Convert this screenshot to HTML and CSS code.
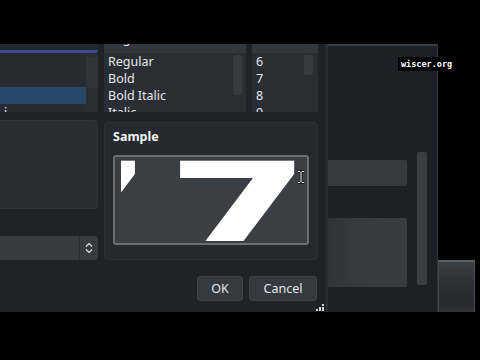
FILE: index.html
```html
<!DOCTYPE html>
<html>
<head>
<meta charset="utf-8">
<link rel="stylesheet" href="styles.css">
</head>
<body>
<div class="screen">
  <div class="bar-top"></div>
  <div class="stage">
    <div class="dialog">
      <div class="lists">
        <div class="col family">
          <div class="filter"></div>
          <div class="list">
            <div class="rows">
              <div class="row"></div>
              <div class="row"></div>
              <div class="row selected"></div>
              <div class="row"><span class="cut-text">i</span></div>
            </div>
            <div class="track"><div class="thumb fam-thumb"></div></div>
          </div>
        </div>
        <div class="col styles">
          <div class="band"><div class="band-text">Regular</div></div>
          <div class="list">
            <div class="rows">
              <div class="row">Regular</div>
              <div class="row">Bold</div>
              <div class="row">Bold Italic</div>
              <div class="row">Italic</div>
            </div>
            <div class="track"><div class="thumb style-thumb"></div></div>
          </div>
        </div>
        <div class="col sizes">
          <div class="band"></div>
          <div class="list">
            <div class="rows">
              <div class="row">6</div>
              <div class="row">7</div>
              <div class="row">8</div>
              <div class="row">9</div>
            </div>
            <div class="track"><div class="thumb size-thumb"></div></div>
          </div>
        </div>
      </div>

      <div class="middle">
        <div class="left-b">
          <div class="panel"></div>
          <div class="combo">
            <div class="combo-text"></div>
            <div class="spin">
              <svg width="8" height="12" viewBox="0 0 8 12"><path d="M1 4.5 L4 1.5 L7 4.5 M1 7.5 L4 10.5 L7 7.5" fill="none" stroke="#e8e8e8" stroke-width="1.2"/></svg>
            </div>
          </div>
        </div>
        <div class="sample-group">
          <div class="sample-label">Sample</div>
          <div class="sample-box">
            <div class="sample-view">
              <div class="sample-text">77</div>
            </div>
            <svg class="ibeam" width="8" height="14" viewBox="0 0 8 14"><path d="M1 1.5 H3 L4 2.5 L5 1.5 H7 M4 2.5 V11.5 M1 12.5 H3 L4 11.5 L5 12.5 H7" fill="none" stroke="#111" stroke-width="2.4"/><path d="M1 1.5 H3 L4 2.5 L5 1.5 H7 M4 2.5 V11.5 M1 12.5 H3 L4 11.5 L5 12.5 H7" fill="none" stroke="#f4f4f4" stroke-width="1"/></svg>
          </div>
        </div>
      </div>

      <div class="buttons">
        <div class="btn ok">OK</div>
        <div class="btn cancel">Cancel</div>
      </div>
      <svg class="grip" width="9" height="7" viewBox="0 0 9 7"><rect x="6" y="0" width="2" height="2" fill="#cfd2d6"/><rect x="3" y="3" width="2" height="2" fill="#cfd2d6"/><rect x="6" y="3" width="2" height="2" fill="#cfd2d6"/><rect x="0" y="5" width="2" height="2" fill="#cfd2d6"/><rect x="3" y="5" width="2" height="2" fill="#cfd2d6"/><rect x="6" y="5" width="2" height="2" fill="#cfd2d6"/></svg>
    </div>

    <div class="sidewin">
      <div class="side-content">
        <div class="side-bar"></div>
        <div class="side-rect"></div>
      </div>
      <div class="side-scroll"></div>
    </div>

    <div class="outside">
      <div class="mini-block"></div>
    </div>
  </div>
  <div class="bar-bottom"></div>
  <div class="watermark">wiscer.org</div>
</div>
</body>
</html>
```
FILE: styles.css
```css
html, body {
  margin: 0;
  padding: 0;
  background: #000;
}
body {
  font-family: "Noto Sans", "DejaVu Sans", sans-serif;
  color: #e6e6e6;
}
.screen {
  width: 480px;
  height: 360px;
  background: #000;
  display: flex;
  flex-direction: column;
  overflow: hidden;
  position: relative;
}
.bar-top { height: 44px; flex: none; }
.bar-bottom { flex: 1; }
.stage {
  height: 268px;
  flex: none;
  display: flex;
}

/* dialog */
.dialog {
  width: 326px;
  flex: none;
  background: #1f2228;
  border-right: 1px solid #2e3238;
  display: flex;
  flex-direction: column;
  position: relative;
}
.lists {
  display: flex;
  height: 68px;
  gap: 6px;
  flex: none;
}
.col { display: flex; flex-direction: column; }
.family { width: 98px; }
.styles { width: 142px; }
.sizes { width: 66px; }
.family .filter {
  height: 6px;
  background: #24272d;
  border-bottom: 3px solid #3c4993;
  border-radius: 0 0 3px 0;
  flex: none;
}
.band {
  height: 9px;
  flex: none;
  background: #33363d;
  overflow: hidden;
}
.band-text {
  font-size: 12.5px;
  line-height: 17px;
  margin-top: -14px;
  padding-left: 4px;
  color: #e8e8e8;
  white-space: nowrap;
}
.list {
  flex: 1;
  display: flex;
  background: #2a2d33;
  overflow: hidden;
}
.family .list { background: #282b31; }
.rows {
  flex: 1;
  font-size: 12.5px;
  line-height: 17px;
}
.row {
  height: 17px;
  padding-left: 4px;
  white-space: nowrap;
  color: #e8e8e8;
}
.row.selected { background: #27476b; }
.cut-text {
  display: inline-block;
  font-size: 12.5px;
  color: #e8e8e8;
}
.track {
  width: 12px;
  flex: none;
}
.family .track { background: #2a2d33; }
.styles .track { width: 9px; margin-right: 4px; }
.sizes .track { width: 9px; margin-right: 5px; }
.thumb {
  background: #363a41;
  border-radius: 2px;
}
.fam-thumb { margin-top: 4px; height: 31px; background: #30343a; }
.style-thumb { margin-top: 2px; height: 40px; }
.size-thumb { margin-top: 2px; height: 20px; }

.middle {
  display: flex;
  gap: 6px;
  margin-top: 8px;
  height: 140px;
  flex: none;
}
.left-b {
  width: 98px;
  display: flex;
  flex-direction: column;
}
.panel {
  height: 91px;
  background: #292c33;
  border: 1px solid #2f333a;
  border-left: none;
  border-radius: 0 3px 3px 0;
  box-sizing: border-box;
}
.combo {
  margin-top: 27px;
  height: 25px;
  background: #363a41;
  display: flex;
  border-radius: 0 3px 3px 0;
}
.combo-text { flex: 1; }
.spin {
  width: 18px;
  border-left: 1px solid #2c2f35;
  display: flex;
  align-items: center;
  justify-content: center;
}
.sample-group {
  width: 214px;
  margin-top: 2px;
  height: 138px;
  background: #262930;
  border: 1px solid #2c3037;
  border-radius: 4px;
  padding: 5px 8px 0 8px;
  box-sizing: border-box;
}
.sample-label {
  font-weight: 700;
  font-size: 12.5px;
  line-height: 17px;
  color: #f4f4f4;
}
.sample-box {
  margin-top: 10px;
  height: 90px;
  width: 196px;
  border: 2px solid #6a6f76;
  border-radius: 3px;
  background: #3a3f46;
  box-sizing: border-box;
  position: relative;
}
.sample-view {
  margin: 2px 4px 2px 6px;
  height: 82px;
  overflow: hidden;
}
.sample-text {
  font-family: "DejaVu Sans", sans-serif;
  font-weight: 700;
  font-size: 125px;
  line-height: 125px;
  letter-spacing: 9px;
  color: #ffffff;
  white-space: nowrap;
  margin-top: -13px;
  margin-left: -114px;
  transform: scaleX(1.66);
  transform-origin: left top;
}
.ibeam {
  position: absolute;
  left: 182px;
  top: 13px;
}

.buttons {
  display: flex;
  justify-content: flex-end;
  gap: 6px;
  margin-top: 16px;
  padding-right: 9px;
}
.btn {
  height: 25px;
  box-sizing: border-box;
  background: #353940;
  border: 1px solid #3d4148;
  border-radius: 3px;
  color: #e6e6e6;
  font-size: 12.5px;
  display: flex;
  align-items: center;
  justify-content: center;
}
.ok { width: 46px; }
.cancel { width: 68px; }
.grip {
  position: absolute;
  right: 1px;
  bottom: 1px;
}

/* window behind, on the right */
.sidewin {
  width: 111px;
  flex: none;
  box-sizing: border-box;
  background: #1d2026;
  border-top: 2px solid #3a3d43;
  border-left: 1px solid #262a30;
  border-right: 1px solid #30333a;
  display: flex;
}
.side-content {
  width: 79px;
  display: flex;
  flex-direction: column;
}
.side-bar {
  margin-top: 114px;
  height: 26px;
  background: #353940;
  border-radius: 0 2px 2px 0;
}
.side-rect {
  margin-top: 32px;
  height: 69px;
  background: linear-gradient(90deg, #30343a, #363a41 40%, #383c43);
  border-radius: 0 2px 2px 0;
}
.side-scroll {
  margin-left: 10px;
  margin-top: 106px;
  width: 10px;
  height: 133px;
  background: #393d44;
  border-radius: 2px;
}
.outside {
  flex: 1;
  display: flex;
  align-items: flex-end;
}
.mini-block {
  width: 37px;
  height: 52px;
  box-sizing: border-box;
  border-top: 2px solid #5c5f64;
  border-left: 1px solid #46494e;
  border-right: 1px solid #4c4f54;
  background: linear-gradient(180deg, #3d4045, #2c2f33 45%, #26292d 80%, #303338);
}

.watermark {
  position: absolute;
  left: 398px;
  top: 57px;
  background: #000;
  color: #fff;
  font-family: "DejaVu Sans Mono", monospace;
  font-weight: 700;
  font-size: 8.5px;
  line-height: 14px;
  padding: 0 3px;
}
```
